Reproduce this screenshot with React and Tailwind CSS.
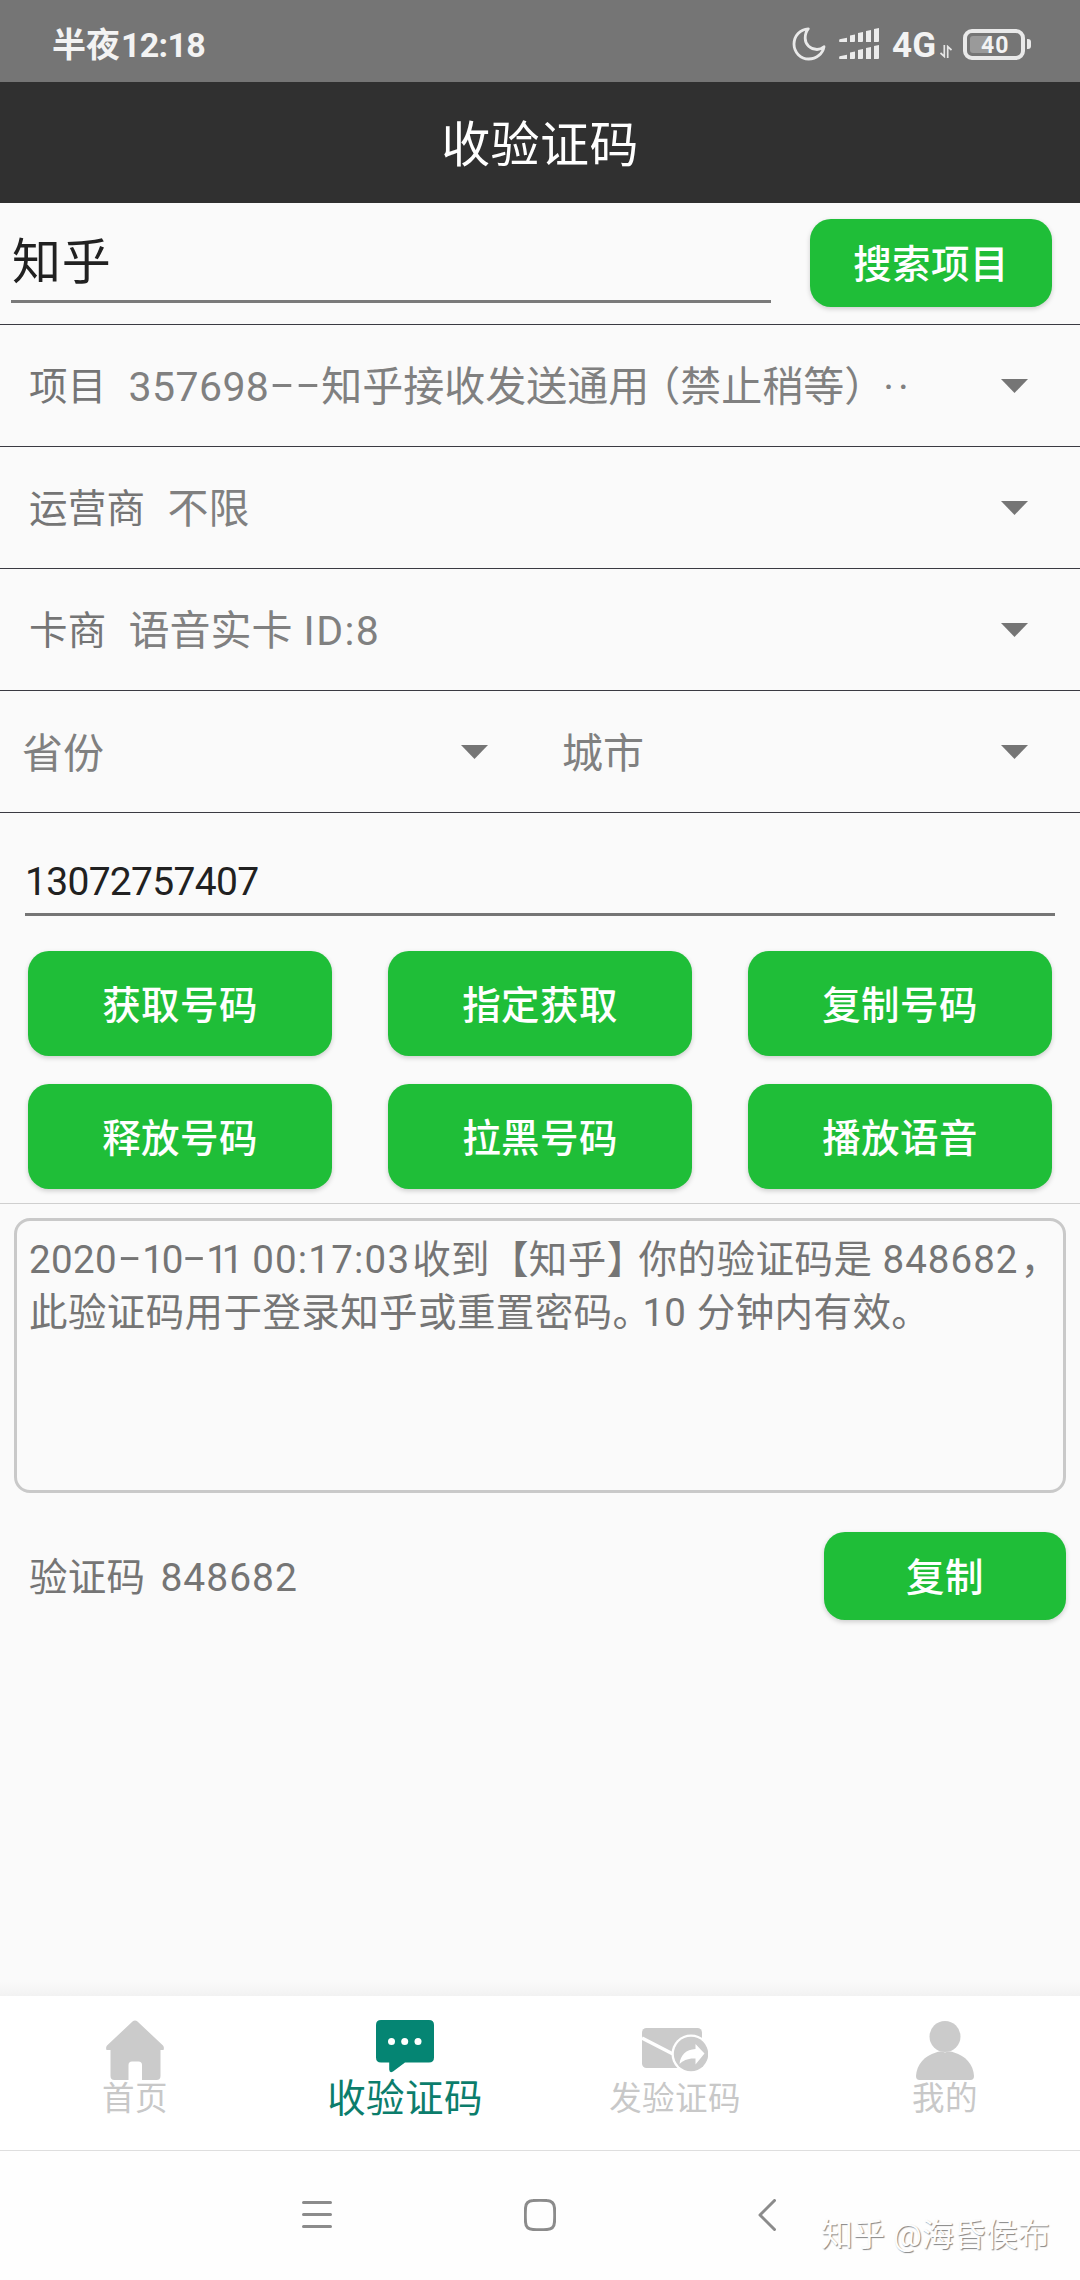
import React from "react";

const Caret = () => (
  <svg className="block h-[14px] w-[27px] shrink-0" viewBox="0 0 27 14">
    <path d="M0 0H27L13.5 14Z" fill="#757575" />
  </svg>
);

const GreenButton = ({ children, className }) => (
  <button
    className={
      "flex items-center justify-center rounded-[21px] bg-[#1fbe38] pt-[5px] text-[38.5px] font-medium tracking-[0.4px] text-white shadow-[0_2px_5px_rgba(0,0,0,0.18)] " +
      className
    }
  >
    {children}
  </button>
);

const Row = ({ children }) => (
  <div className="flex h-[122px] shrink-0 items-center border-b border-[#3a3a42] pr-[52px] pl-[29px]">
    {children}
  </div>
);

const Label = ({ children }) => (
  <span className="pt-1 text-[38.5px] tracking-[0.3px] text-[#757575]">{children}</span>
);

// Wide hyphen: the glyph is stretched inside a fixed cell
const Dash = ({ className }) => (
  <span className={"inline-block -translate-y-[3px] scale-x-[1.9] text-center " + className}>-</span>
);

const Moon = () => (
  <svg className="h-[34px] w-[34px]" viewBox="0 0 34 34" fill="none">
    <path
      d="M16.3 1.8C8.2 2.2 2 8.7 2 17.1C2 25.5 8.6 32 16.7 32C24.5 32 30.8 26.5 32 19.7C30 21.5 27.5 22.5 25 22.5C18.5 22.5 13.2 17.8 13.2 11.3C13.2 7.5 14.3 4 16.3 1.8Z"
      stroke="#e9e9e9"
      strokeWidth="2.8"
      strokeLinejoin="round"
    />
  </svg>
);

const Signal = () => (
  <svg className="h-[32px] w-[40px]" viewBox="0 0 40 32" fill="#ececec">
    {[0, 17].map((y) => (
      <g key={y} transform={"translate(0 " + y + ")"}>
        <path d="M0.5 11.2L8 9.7V14H1Q0 14 0 13Z" />
        <path d="M11 7.5L16 6.5V13Q16 14 15 14H11Z" />
        <path d="M19 5L24 4V13Q24 14 23 14H19Z" />
        <path d="M27 3L32 2V14H27Z" />
        <path d="M35 1L40 0V13Q40 14 39 14H35Z" />
      </g>
    ))}
  </svg>
);

const DataArrows = () => (
  <svg className="h-[13px] w-[12px]" viewBox="0 0 12 13" fill="none" stroke="#e6e6e6" strokeWidth="1.7">
    <path d="M4.3 0V11.5L0.5 8" />
    <path d="M7.7 13V1.5L11.5 5" />
  </svg>
);

const HomeIcon = () => (
  <svg className="h-[60px] w-[58px]" viewBox="0 0 58 60" fill="#cbcbcb">
    <path d="M26.5 1.5Q29 -0.5 31.5 1.5L57 25.5Q58.5 27.5 57.5 30H54.5V56Q54.5 60 50.5 60H36V45Q36 41.5 32.5 41.5H26Q22.5 41.5 22.5 45V60H8.5Q4.5 60 4.5 56V30H0.5Q-0.5 27.5 1 25.5Z" />
  </svg>
);

const ChatIcon = () => (
  <svg className="h-[53px] w-[58px]" viewBox="0 0 58 53">
    <path
      d="M5 0H53Q58 0 58 5V37.5Q58 42.5 53 42.5H29L17 51.5Q13.5 53.5 13.2 49.5V42.5H5Q0 42.5 0 37.5V5Q0 0 5 0Z"
      fill="#058573"
    />
    <circle cx="15.5" cy="21.5" r="3.5" fill="#fff" />
    <circle cx="28.7" cy="21.5" r="3.5" fill="#fff" />
    <circle cx="42" cy="21.5" r="3.5" fill="#fff" />
  </svg>
);

const SendIcon = () => (
  <svg className="h-[44px] w-[66px]" viewBox="0 0 66 44">
    <rect x="0" y="0" width="60" height="40" rx="4.5" fill="#cbcbcb" />
    <path d="M0 10L31 26" stroke="#fff" strokeWidth="3.5" />
    <circle cx="49" cy="26" r="19.5" fill="#fff" />
    <circle cx="49" cy="26" r="17.2" fill="#cbcbcb" />
    <path d="M53.5 16L62.5 25.5L53.5 36.5V30.5C46 30 41 32.5 37.5 36C38.5 27 44 21.5 53.5 21Z" fill="#fff" />
  </svg>
);

const UserIcon = () => (
  <svg className="h-[59px] w-[58px]" viewBox="0 0 58 59" fill="#cbcbcb">
    <circle cx="29" cy="15.5" r="15.5" />
    <path d="M20 31.5Q24 29.5 29 31.5Q34 29.5 38 31.5C49.5 34.5 57.5 44 58 55Q58 59 54.5 59H3.5Q0 59 0 55C0.5 44 8.5 34.5 20 31.5Z" />
  </svg>
);

const Tab = ({ icon, label, active }) => (
  <div className="flex flex-1 flex-col items-center pt-[24px]">
    <div className={active ? "h-[60px]" : "flex h-[60px] items-center"}>{icon}</div>
    <span
      className={
        active
          ? "-mt-px text-[38.5px] leading-[40px] tracking-[0.4px] text-[#0c7d6c]"
          : "-mt-px text-[32.5px] leading-[40px] tracking-[0.4px] text-[#c8c8c8]"
      }
    >
      {label}
    </span>
  </div>
);

export default function App() {
  return (
    <div className="flex h-[2280px] w-[1080px] flex-col overflow-hidden bg-[#fafafa] font-[Roboto,'Noto_Sans_CJK_SC',sans-serif] leading-none whitespace-nowrap">
      {/* Status bar */}
      <div className="flex h-[82px] shrink-0 items-center bg-[#757575] pr-[49px] pl-[52px] text-[#f3f3f3]">
        <div className="flex items-center pt-[7px] text-[34px] font-bold">
          <span>半夜</span>
          <span className="pl-px tracking-[-0.7px]">12:18</span>
        </div>
        <div className="ml-auto flex items-center pt-[6px]">
          <Moon />
          <span className="ml-[13px] flex"><Signal /></span>
          <span className="ml-[13px] pt-[2px] text-[35px] font-bold">4G</span>
          <span className="mt-[15px] ml-[4px] flex"><DataArrows /></span>
          <div className="ml-[11px] flex h-[31px] w-[62px] items-center rounded-[9px] border-[4px] border-[#e9e9e9] px-[3px]">
            <div className="h-[17px] w-[18px] rounded-l-[3px] bg-[#9a9a9a]" />
            <span className="-ml-[7px] pt-[2px] text-[23px] font-bold tracking-[1px]">40</span>
          </div>
          <div className="ml-[2px] h-[10px] w-[4px] rounded-r-[3px] bg-[#e9e9e9]" />
        </div>
      </div>

      {/* Title bar */}
      <div className="flex h-[121px] shrink-0 items-center justify-center bg-[#303030] pt-[5px] text-[49px] tracking-[0.4px] text-white">
        收验证码
      </div>

      {/* Search */}
      <div className="flex h-[122px] shrink-0 items-start border-b border-[#3a3a42] pr-[28px] pl-[11px]">
        <div className="h-[100px] w-[760px] border-b-[3px] border-[#7a7a7a] pt-[35px] pl-[1px] text-[49px] leading-[50px] tracking-[0.8px] text-[#212121]">
          知乎
        </div>
        <GreenButton className="mt-[16px] ml-auto h-[88px] w-[242px]">搜索项目</GreenButton>
      </div>

      {/* Selectors */}
      <Row>
        <Label>项目</Label>
        <span className="flex flex-1 pt-1 pl-[22px] text-[41px] text-[#808080]">
          <span className="tracking-[0.4px]">357698</span>
          <Dash className="w-[26px]" />
          <Dash className="w-[26px]" />
          <span>知乎接收发送通用</span>
          <span className="-ml-[10px]">（禁止稍等）</span>
          <span className="-ml-[2px] tracking-[4px]">··</span>
        </span>
        <Caret />
      </Row>
      <Row>
        <Label>运营商</Label>
        <span className="flex-1 pt-1 pl-[22px] text-[41px] text-[#808080]">不限</span>
        <Caret />
      </Row>
      <Row>
        <Label>卡商</Label>
        <span className="flex flex-1 pt-1 pl-[22px] text-[41px] text-[#808080]">
          <span>语音实卡</span>
          <span className="pl-[11px] tracking-[1.4px]">ID:8</span>
        </span>
        <Caret />
      </Row>
      <div className="grid h-[122px] shrink-0 grid-cols-2 border-b border-[#3a3a42] text-[41px] text-[#808080]">
        <div className="flex items-center justify-between pr-[52px] pl-[22px]">
          <span className="pt-[5px]">省份</span>
          <Caret />
        </div>
        <div className="flex items-center justify-between pr-[52px] pl-[22px]">
          <span className="pt-[5px]">城市</span>
          <Caret />
        </div>
      </div>

      {/* Phone number */}
      <div className="mx-[25px] h-[103px] shrink-0 border-b-[3px] border-[#757575] pt-[49px] text-[39px] leading-[40px] tracking-[-0.7px] text-[#212121]">
        13072757407
      </div>

      {/* Actions */}
      <div className="mt-[35px] grid shrink-0 grid-cols-3 gap-x-[56px] gap-y-[28px] px-[28px]">
        {["获取号码", "指定获取", "复制号码", "释放号码", "拉黑号码", "播放语音"].map((t) => (
          <GreenButton key={t} className="h-[105px]">{t}</GreenButton>
        ))}
      </div>
      <div className="mt-[14px] h-px shrink-0 bg-[#cfcfcf]" />

      {/* Message */}
      <div className="mx-[14px] mt-[14px] h-[275px] shrink-0 rounded-[16px] border-[3px] border-[#c9c9c9] pt-[13px] pl-[12px] text-[38.5px] leading-[52.5px] text-[#757575]">
        <div className="flex">
          <span className="tracking-[0.4px]">2020</span>
          <Dash className="w-[25px]" />
          <span className="w-[40px] tracking-[-2px]">10</span>
          <Dash className="w-[24px]" />
          <span className="w-[46px] tracking-[-6px]">11</span>
          <span className="w-[160px] tracking-[1.2px]">00:17:03</span>
          <span className="tracking-[0.4px]">收到【知乎】</span>
          <span className="-ml-[7px] tracking-[0.5px]">你的验证码是</span>
          <span className="pl-[10px] tracking-[1px]">848682</span>
          <span className="w-[34px] pl-[2px]">，</span>
        </div>
        <div className="flex">
          <span className="tracking-[0.4px]">此验证码用于登录知乎或重置密码</span>
          <span className="w-[30px] [font-feature-settings:'halt']">。</span>
          <span>10</span>
          <span className="pl-[11px] tracking-[0.4px]">分钟内有效。</span>
        </div>
      </div>

      {/* Code */}
      <div className="mt-[39px] flex h-[88px] shrink-0 items-center pr-[14px] pl-[29px]">
        <Label>验证码</Label>
        <span className="pt-1 pl-[15px] text-[39px] tracking-[1px] text-[#757575]">848682</span>
        <GreenButton className="ml-auto h-[88px] w-[242px]">复制</GreenButton>
      </div>

      {/* Tab bar */}
      <div className="mt-auto h-[14px] shrink-0 bg-linear-to-b from-[#fafafa] to-[#f2f2f2]" />
      <div className="flex h-[155px] shrink-0 border-b border-[#dedede] bg-white">
        <Tab icon={<HomeIcon />} label="首页" />
        <Tab icon={<ChatIcon />} label="收验证码" active />
        <Tab icon={<SendIcon />} label="发验证码" />
        <Tab icon={<UserIcon />} label="我的" />
      </div>

      {/* System navigation */}
      <div className="flex h-[129px] shrink-0 items-start bg-[#fefefe] pt-[48px] pl-[302px]">
        <svg className="h-[32px] w-[30px]" viewBox="0 0 30 32" stroke="#8b8b8b" strokeWidth="3" strokeLinecap="round">
          <path d="M1.5 3.5H28.5M1.5 15.5H28.5M1.5 27.5H28.5" />
        </svg>
        <svg className="ml-[192px] h-[32px] w-[32px]" viewBox="0 0 32 32" fill="none" stroke="#8b8b8b" strokeWidth="3">
          <path d="M9 1.5Q16 1 23 1.5Q30 1.8 30.5 9Q31 16 30.5 23Q30.2 30.2 23 30.5Q16 31 9 30.5Q1.8 30.2 1.5 23Q1 16 1.5 9Q1.8 1.8 9 1.5Z" />
        </svg>
        <svg className="ml-[202px] h-[32px] w-[18px]" viewBox="0 0 18 32" fill="none" stroke="#8b8b8b" strokeWidth="3" strokeLinecap="round" strokeLinejoin="round">
          <path d="M16.5 1.5L2 16L16.5 30.5" />
        </svg>
        <span className="mt-[20px] ml-[45px] text-[32px] text-[#fdfdfd] [text-shadow:1px_1px_1px_#858585]">知乎 @海昏侯布</span>
      </div>
    </div>
  );
}
